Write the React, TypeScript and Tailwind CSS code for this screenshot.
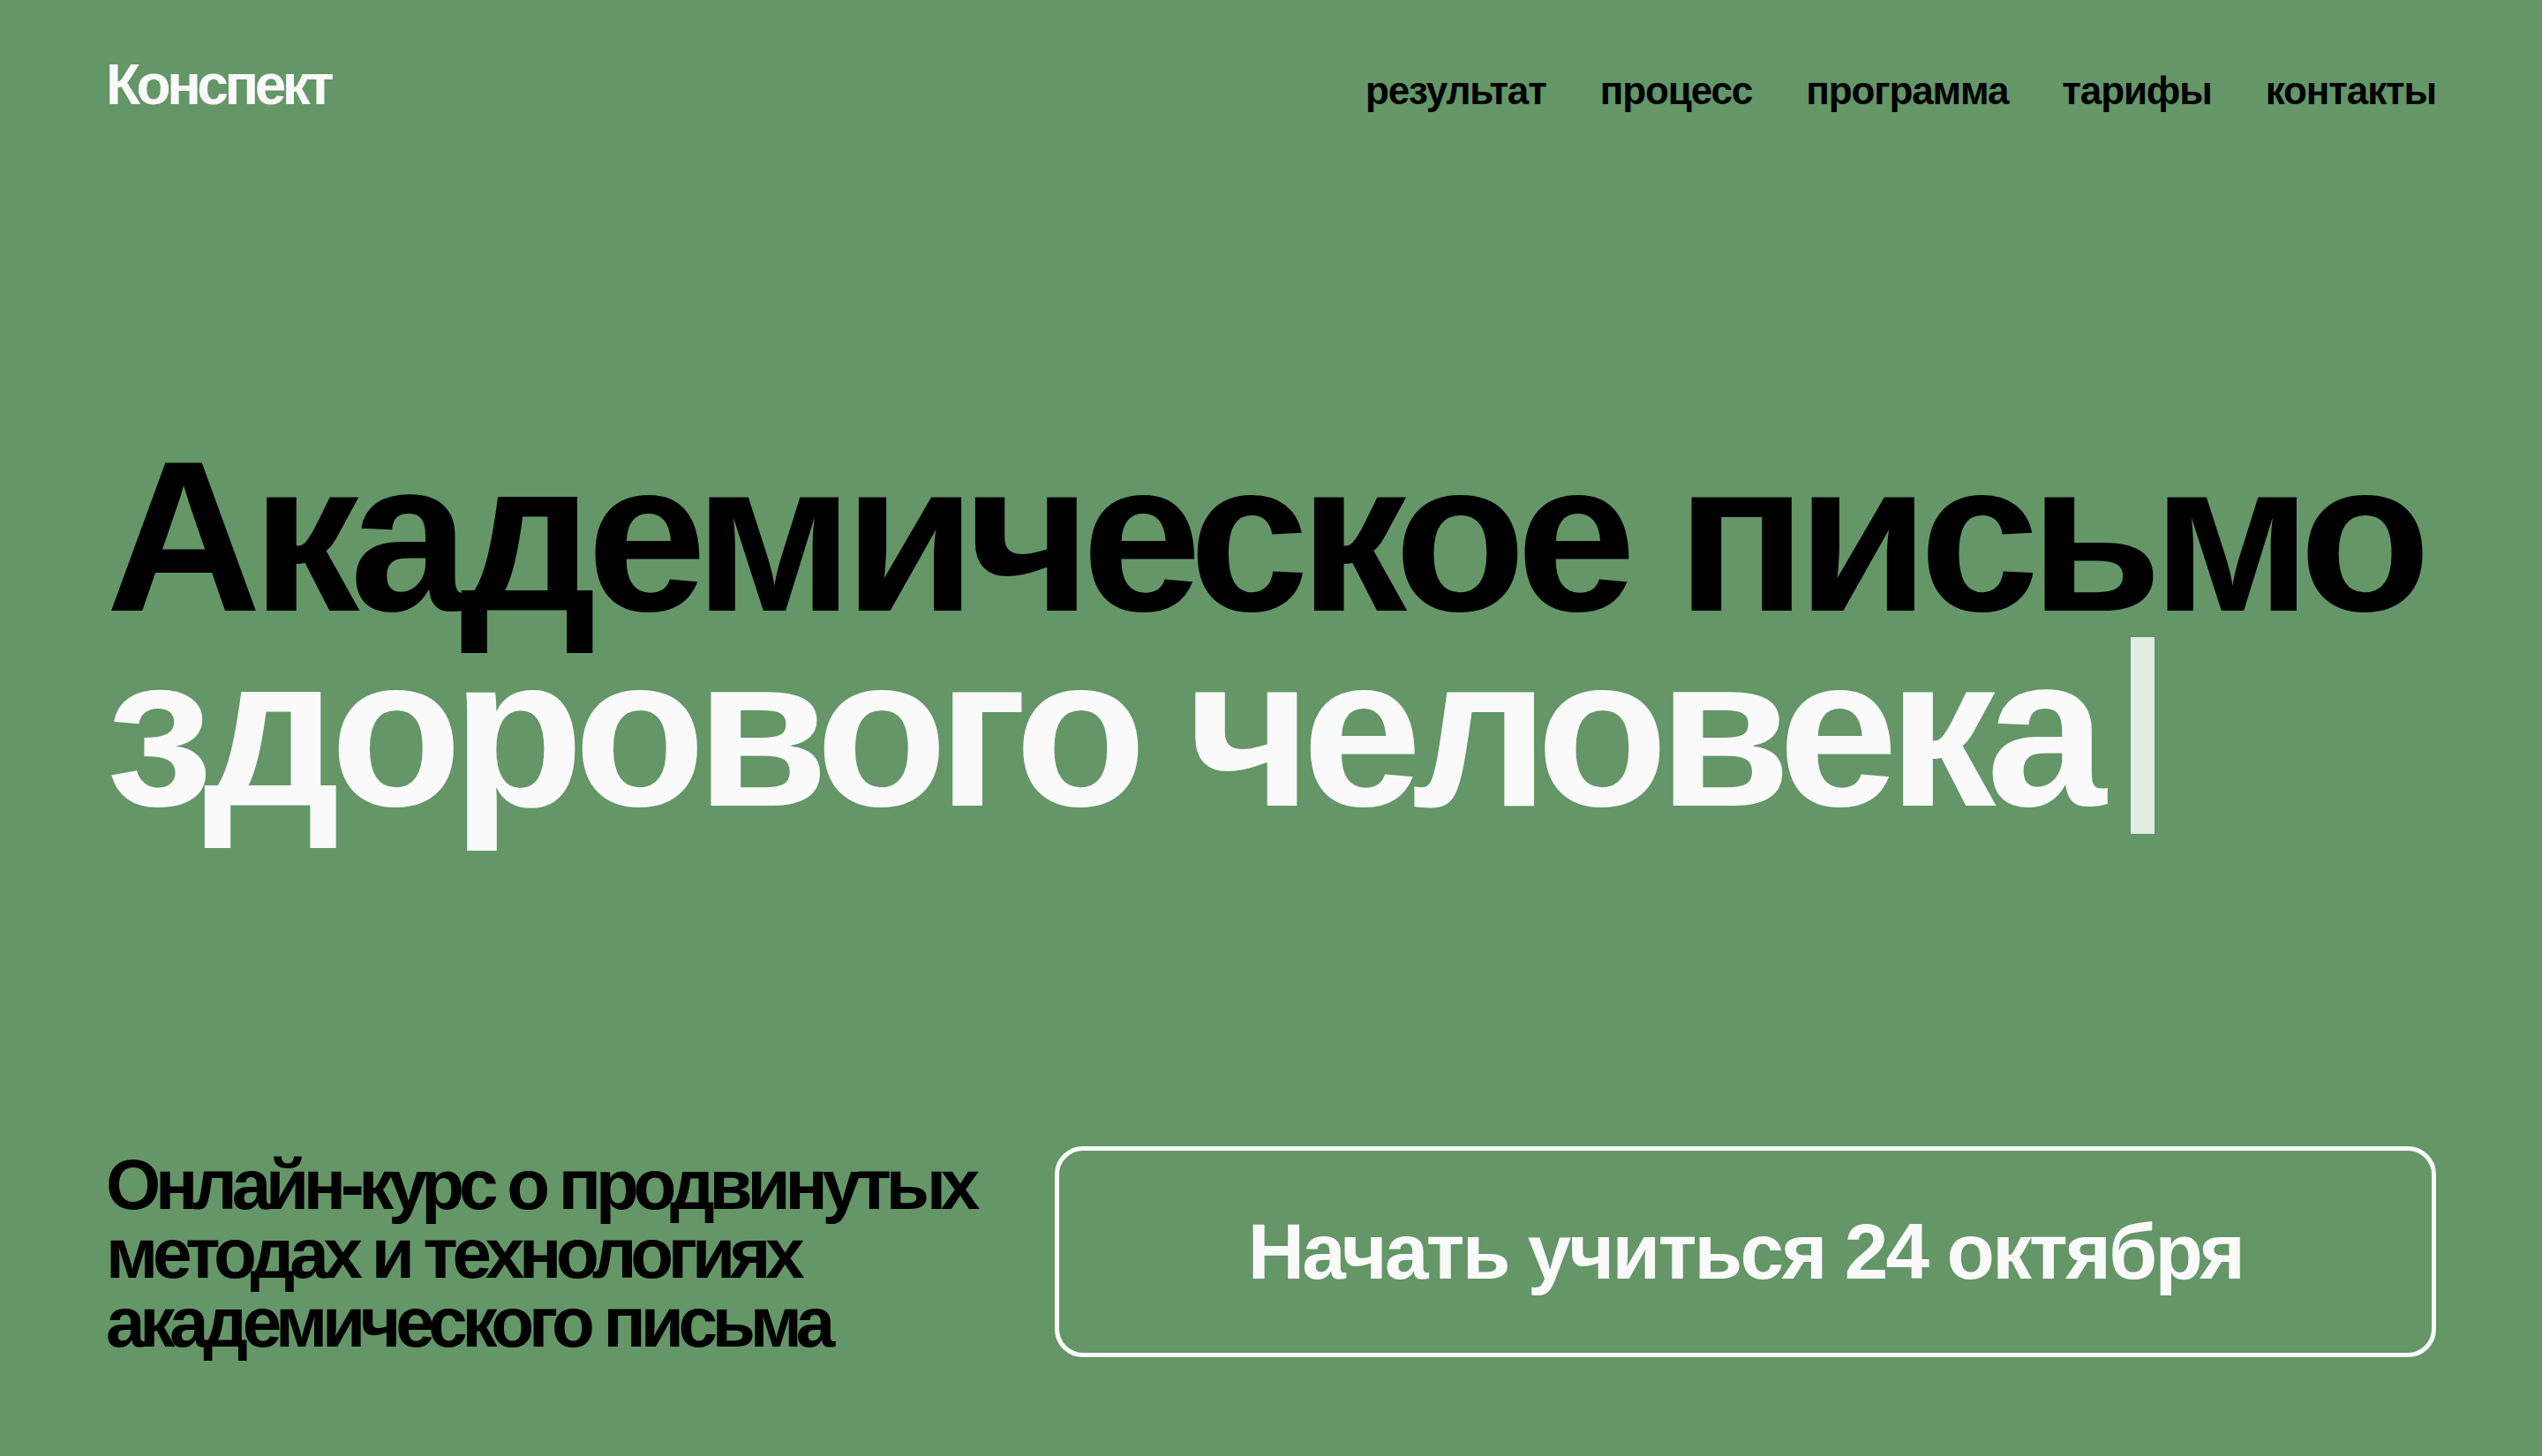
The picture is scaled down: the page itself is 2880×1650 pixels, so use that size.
const navItems = ['результат', 'процесс', 'программа', 'тарифы', 'контакты'];

export default function App() {
  return (
    <div className="min-h-screen bg-[#649668] px-[120px] pt-16 pb-[111px] font-['Liberation_Sans',Arial,sans-serif] font-bold">
      {/* Header */}
      <header className="flex items-baseline justify-between">
        <a href="#" className="text-[64px] leading-none tracking-[-0.07em] text-[#fafafa]">
          Конспект
        </a>
        <nav className="flex items-baseline gap-[61px]">
          {navItems.map((item) => (
            <a key={item} href="#" className="text-[44px] leading-none tracking-[-0.025em] text-black">
              {item}
            </a>
          ))}
        </nav>
      </header>

      {/* Hero title */}
      <h1 className="mt-[369px] text-[244px] leading-[221px] tracking-[-0.045em] whitespace-nowrap">
        <span className="block text-black">Академическое письмо</span>
        <span className="block text-[#fafafa]">
          здорового человека
          <span className="ml-[39px] inline-block h-[223px] w-[27px] bg-[#e3ebe3] align-[-32px]" />
        </span>
      </h1>

      {/* Bottom row */}
      <div className="mt-[354px] flex items-end">
        <p className="w-[1075px] shrink-0 text-[80px] leading-[78px] tracking-[-0.078em] text-black">
          Онлайн-курс о продвинутых
          <br />
          методах и технологиях
          <br />
          академического письма
        </p>
        <button className="flex h-[239px] flex-1 items-center justify-center rounded-[32px] border-[5px] border-[#fafafa] text-[89px] leading-none tracking-[-0.03em] text-[#fafafa]">
          Начать учиться 24 октября
        </button>
      </div>
    </div>
  );
}
